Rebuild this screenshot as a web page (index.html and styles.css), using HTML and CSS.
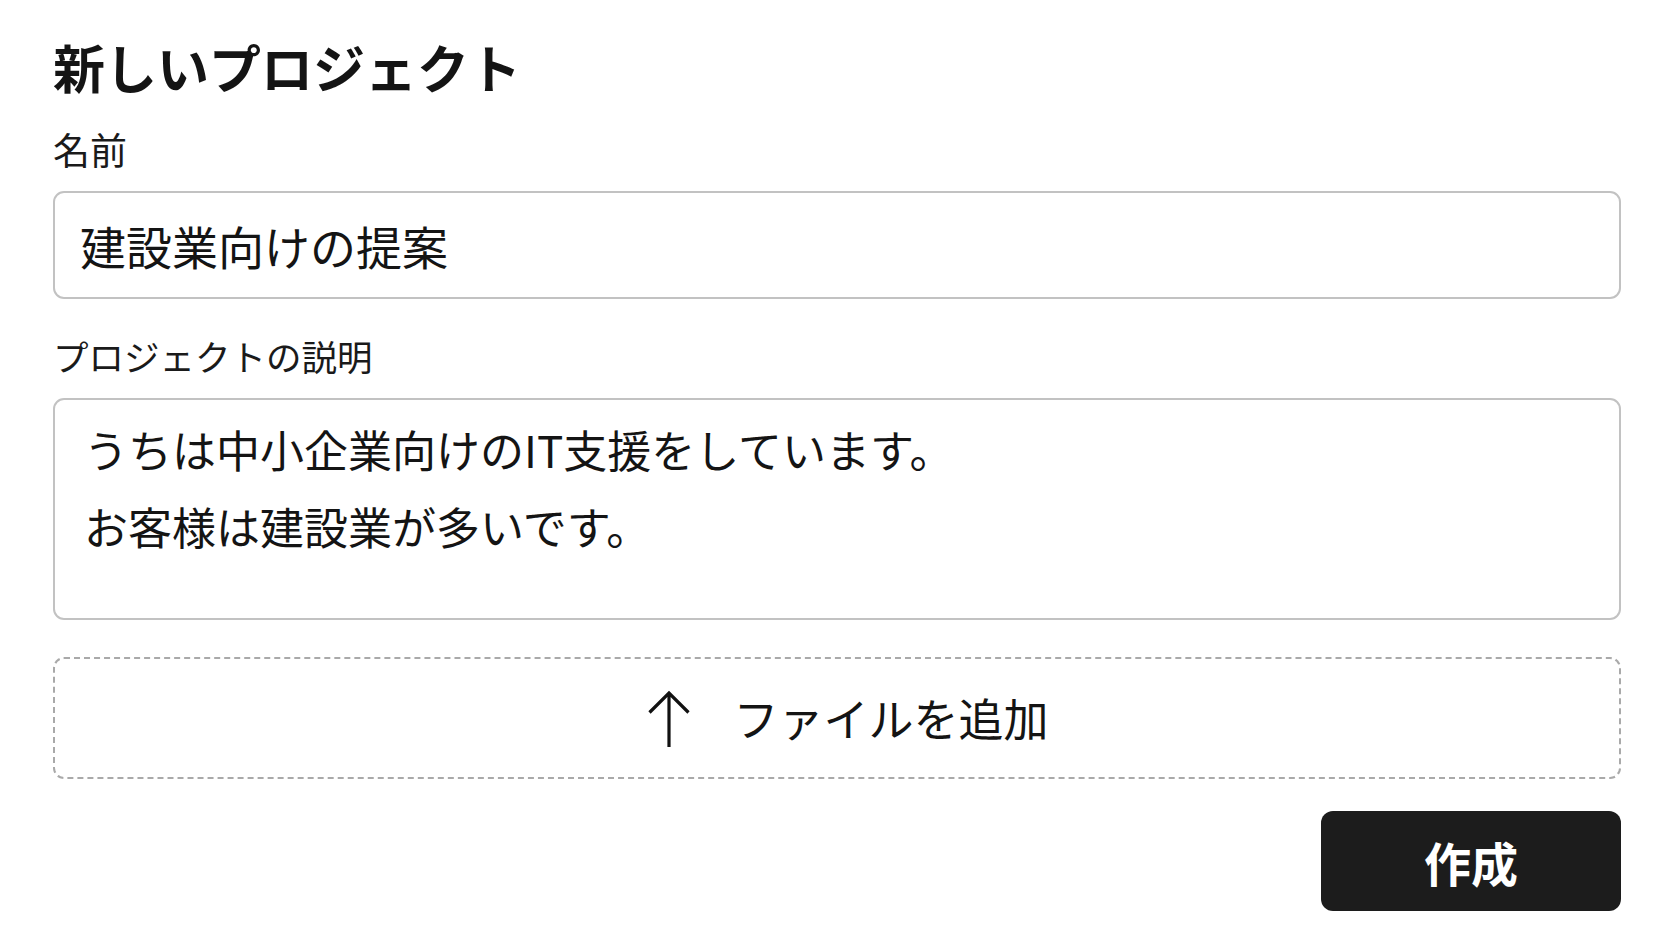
FILE: index.html
```html
<!DOCTYPE html>
<html lang="ja">
<head>
<meta charset="utf-8">
<title>新しいプロジェクト</title>
<link rel="stylesheet" href="styles.css">
</head>
<body>
<main class="page">
  <h1 class="title">新しいプロジェクト</h1>
  <div class="field">
    <label class="label" for="name">名前</label>
    <input class="input" id="name" type="text" value="建設業向けの提案">
  </div>
  <div class="field field-desc">
    <label class="label label-desc" for="desc">プロジェクトの説明</label>
    <textarea class="textarea" id="desc">うちは中小企業向けのIT支援をしています。
お客様は建設業が多いです。</textarea>
  </div>
  <div class="dropzone">
    <svg class="arrow" width="44" height="58" viewBox="0 0 44 58" aria-hidden="true">
      <path d="M22 57 V3 M2.5 22.5 L22 3 L41.5 22.5" fill="none" stroke="#111" stroke-width="3.2" stroke-linecap="butt" stroke-linejoin="miter"/>
    </svg>
    <span class="drop-text">ファイルを追加</span>
  </div>
  <div class="actions">
    <button class="btn" type="button">作成</button>
  </div>
</main>
</body>
</html>
```

FILE: styles.css
```css
* { box-sizing: border-box; }
html, body { margin: 0; padding: 0; background: #ffffff; }
body {
  font-family: "Noto Sans CJK JP", "Noto Sans", sans-serif;
  color: #141414;
}
.page {
  width: 1672px;
  padding: 35px 51px 0 53px;
  display: flex;
  flex-direction: column;
}
.title {
  margin: 0 0 26px 0;
  font-size: 52px;
  line-height: 64px;
  font-weight: 700;
  color: #141414;
}
.field {
  display: flex;
  flex-direction: column;
}
.field-desc { margin-top: 33px; }
.label {
  font-size: 37px;
  line-height: 48px;
  margin-bottom: 18px;
  color: #1a1a1a;
}
.label-desc { font-size: 35.5px; }
.input {
  height: 108px;
  width: 100%;
  border: 2px solid #c2c2c2;
  border-radius: 11px;
  padding: 0 25px;
  font-family: inherit;
  font-size: 46px;
  color: #141414;
  background: #fff;
  outline: none;
}
.textarea {
  height: 222px;
  width: 100%;
  border: 2px solid #c2c2c2;
  border-radius: 11px;
  padding: 11px 29px;
  font-family: inherit;
  font-size: 44px;
  line-height: 77px;
  color: #141414;
  background: #fff;
  resize: none;
  outline: none;
  overflow: hidden;
}
.dropzone {
  margin-top: 37px;
  height: 122px;
  border: 2px dashed #a9a9a9;
  border-radius: 11px;
  display: flex;
  align-items: center;
  justify-content: center;
  gap: 42px;
  padding-left: 22px;
}
.arrow { display: block; margin-top: 2px; }
.drop-text {
  font-size: 45px;
  line-height: 60px;
  color: #141414;
}
.actions {
  margin-top: 32px;
  display: flex;
  justify-content: flex-end;
}
.btn {
  width: 300px;
  height: 100px;
  border: none;
  border-radius: 12px;
  background: #1c1c1c;
  color: #ffffff;
  font-family: inherit;
  font-size: 47px;
  font-weight: 700;
  line-height: 1;
  padding: 0;
  cursor: pointer;
}
```
